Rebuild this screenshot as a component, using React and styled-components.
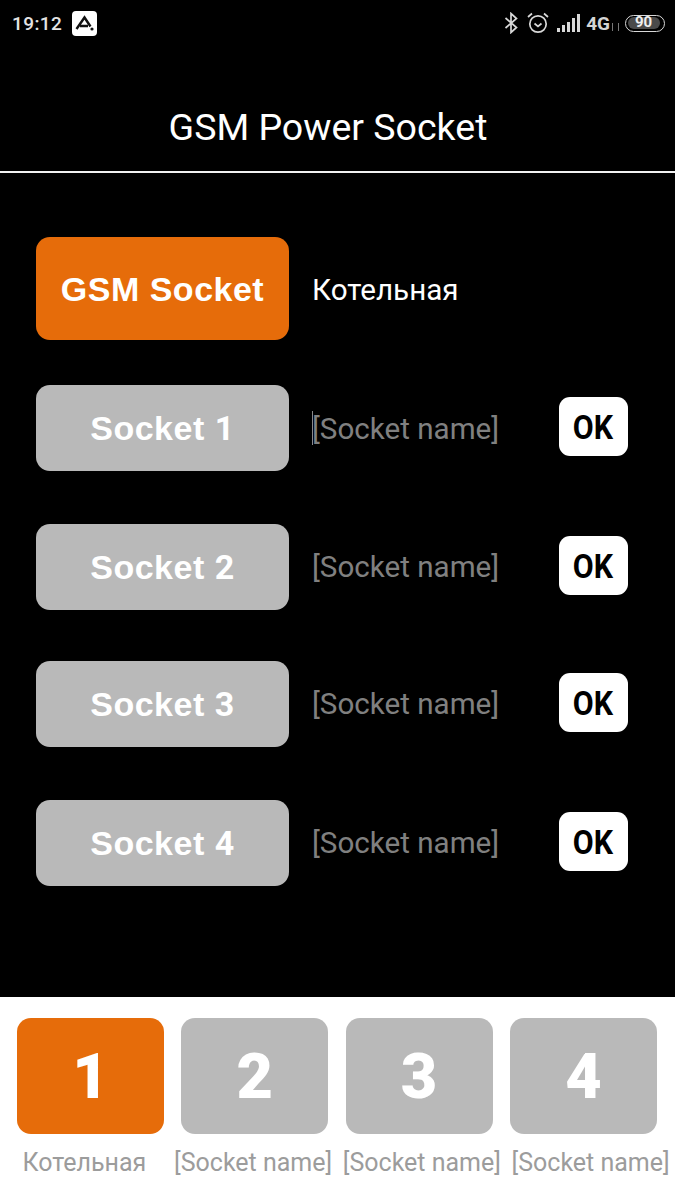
import React from 'react';
import styled, { createGlobalStyle } from 'styled-components';

const GlobalStyle = createGlobalStyle`
  html, body {
    margin: 0;
    padding: 0;
    background: #000;
  }
  body {
    font-family: Roboto, "Liberation Sans", sans-serif;
  }
`;

const ORANGE = '#e66c0a';
const GREY = '#b9b9b9';

const Screen = styled.div`
  width: 675px;
  height: 1200px;
  background: #000;
  display: flex;
  flex-direction: column;
  overflow: hidden;
`;

const StatusBar = styled.div`
  height: 46px;
  padding: 0 10px 0 12px;
  display: flex;
  align-items: center;
  color: #e4e4e4;
`;

const Clock = styled.span`
  font-family: Roboto, sans-serif;
  font-weight: 500;
  font-size: 19px;
  letter-spacing: 0.4px;
`;

const AppBadge = styled.svg`
  margin-left: 10px;
  width: 25px;
  height: 25px;
`;

const StatusIcons = styled.div`
  margin-left: auto;
  display: flex;
  align-items: center;
`;

const NetLabel = styled.span`
  font-family: Roboto, sans-serif;
  font-weight: 700;
  font-size: 19px;
  margin-left: 5px;
  color: #d4d4d4;
`;

const TinyArrows = styled.span`
  width: 5px;
  height: 8px;
  margin: 8px 6px 0 2px;
  border-left: 1px solid #777;
  border-right: 1px solid #777;
`;

const Battery = styled.div`
  width: 40px;
  height: 17px;
  border: 1.5px solid #d8d8d8;
  border-radius: 9px;
  box-sizing: border-box;
  padding: 1.5px;
  display: flex;
`;

const BatteryFill = styled.div`
  flex: 1;
  margin-right: 3px;
  background: #4a4a4a;
  border-radius: 6px;
  color: #efefef;
  font-weight: 700;
  font-size: 15px;
  line-height: 11px;
  text-align: center;
`;

const Header = styled.header`
  height: 127px;
  box-sizing: border-box;
  padding: 59px 19px 0 0;
  border-bottom: 2px solid #f2f2f2;
  text-align: center;
  color: #fff;
  font-size: 37.5px;
  line-height: 44px;
`;

const Main = styled.main`
  flex: 1;
  padding: 64px 47px 0 36px;
`;

const Row = styled.div`
  display: flex;
  align-items: center;
  margin-top: ${p => p.$top}px;
`;

const SocketButton = styled.button`
  flex: none;
  width: 253px;
  height: ${p => (p.$active ? 103 : 86)}px;
  padding: ${p => (p.$active ? 2 : 0)}px 0 0;
  border: 0;
  border-radius: 14px;
  background: ${p => (p.$active ? ORANGE : GREY)};
  color: #fff;
  font-family: "Liberation Sans", Arial, sans-serif;
  font-weight: 700;
  font-size: 34px;
  letter-spacing: 0.5px;
`;

const SocketDigit = styled.span`
  font-family: Roboto, sans-serif;
`;

const SocketName = styled.span`
  flex: 1;
  margin-left: 23px;
  padding-top: ${p => (p.$placeholder ? 0 : 2)}px;
  font-size: 29.6px;
  color: ${p => (p.$placeholder ? '#808080' : '#fff')};
`;

const Cursor = styled.span`
  display: inline-block;
  width: 1px;
  height: 34px;
  margin-right: -1px;
  vertical-align: -6px;
  background: #8a8a8a;
`;

const OkButton = styled.button`
  flex: none;
  width: 69px;
  height: 59px;
  margin-top: -3px;
  padding: 2px 2px 0 0;
  border: 0;
  border-radius: 11px;
  background: #fff;
  color: #000;
  font-family: Roboto, sans-serif;
  font-weight: 700;
  font-size: 33px;
`;

const OkText = styled.span`
  display: inline-block;
  transform: scaleX(0.92);
`;

const Footer = styled.footer`
  height: 203px;
  box-sizing: border-box;
  padding-top: 21px;
  background: #fff;
`;

const Tiles = styled.div`
  padding: 0 18px 0 17px;
  display: grid;
  grid-template-columns: repeat(4, 147px);
  column-gap: 17.3px;
`;

const SlotTile = styled.div`
  height: 116px;
  border-radius: 14px;
  background: ${p => (p.$active ? ORANGE : GREY)};
  color: #fff;
  font-family: Roboto, Arial, sans-serif;
  font-weight: 900;
  font-size: 63px;
  line-height: 118px;
  text-align: center;
`;

const Labels = styled.div`
  margin-top: 14px;
  display: grid;
  grid-template-columns: repeat(4, 1fr);
`;

const SlotLabel = styled.div`
  font-size: 25px;
  line-height: 30px;
  color: #9c9c9c;
  white-space: nowrap;
  text-align: center;
`;

const sockets = [
  { digit: 1, top: 45, cursor: true },
  { digit: 2, top: 53 },
  { digit: 3, top: 51 },
  { digit: 4, top: 53 },
];

const slots = ['Котельная', '[Socket name]', '[Socket name]', '[Socket name]'];

const StatusGlyphs = () => (
  <>
    <svg width="14" height="22" viewBox="0 0 14 22" fill="none" stroke="#d8d8d8" strokeWidth="1.7">
      <path d="M1.5 6l11 9.5L7 20.5V1.5l5.5 5L1.5 16" />
    </svg>
    <svg width="24" height="24" viewBox="0 0 24 24" fill="none" stroke="#d8d8d8" strokeWidth="1.7" style={{ marginLeft: 8 }}>
      <circle cx="12" cy="13" r="8.2" />
      <path d="M8.5 12.5l3.5 3 3.5-3M2 6l4-3.5M22 6l-4-3.5" />
    </svg>
    <svg width="24" height="18" viewBox="0 0 24 18" fill="#d8d8d8" style={{ marginLeft: 7 }}>
      <rect x="0" y="14" width="3" height="4" />
      <rect x="5" y="11" width="3" height="7" />
      <rect x="10" y="8" width="3" height="10" />
      <rect x="15" y="4" width="3" height="14" />
      <rect x="20" y="0" width="3" height="18" />
    </svg>
  </>
);

export default function App() {
  return (
    <Screen>
      <GlobalStyle />
      <StatusBar>
        <Clock>19:12</Clock>
        <AppBadge viewBox="0 0 25 25">
          <rect width="25" height="25" rx="4" fill="#fff" />
          <path d="M4.5 18L12.5 6.5 18.5 15.5M8 15h8" fill="none" stroke="#111" strokeWidth="2.4" />
          <circle cx="20" cy="18" r="1.6" fill="#111" />
        </AppBadge>
        <StatusIcons>
          <StatusGlyphs />
          <NetLabel>4G</NetLabel>
          <TinyArrows />
          <Battery>
            <BatteryFill>90</BatteryFill>
          </Battery>
        </StatusIcons>
      </StatusBar>
      <Header>GSM Power Socket</Header>
      <Main>
        <Row $top={0}>
          <SocketButton $active>GSM Socket</SocketButton>
          <SocketName>Котельная</SocketName>
        </Row>
        {sockets.map(s => (
          <Row key={s.digit} $top={s.top}>
            <SocketButton>
              Socket <SocketDigit>{s.digit}</SocketDigit>
            </SocketButton>
            <SocketName $placeholder>
              {s.cursor && <Cursor />}[Socket name]
            </SocketName>
            <OkButton><OkText>OK</OkText></OkButton>
          </Row>
        ))}
      </Main>
      <Footer>
        <Tiles>
          {slots.map((name, i) => (
            <SlotTile key={i} $active={i === 0}>{i + 1}</SlotTile>
          ))}
        </Tiles>
        <Labels>
          {slots.map((name, i) => (
            <SlotLabel key={i}>{name}</SlotLabel>
          ))}
        </Labels>
      </Footer>
    </Screen>
  );
}
